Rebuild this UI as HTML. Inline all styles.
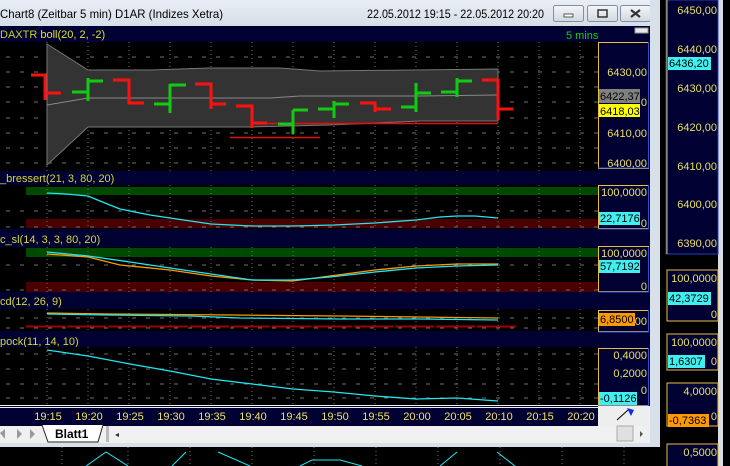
<!DOCTYPE html>
<html><head><meta charset="utf-8"><style>
html,body{margin:0;padding:0;background:#000;width:730px;height:466px;overflow:hidden}
svg{display:block}
text{font-family:"Liberation Sans",sans-serif;font-size:11px}
</style></head><body>
<svg width="730" height="466" viewBox="0 0 730 466">
<defs>
<linearGradient id="tb" x1="0" y1="0" x2="0" y2="1"><stop offset="0" stop-color="#e9eef4"/><stop offset="1" stop-color="#d6dee8"/></linearGradient>
<linearGradient id="bt" x1="0" y1="0" x2="0" y2="1"><stop offset="0" stop-color="#f4f6f8"/><stop offset="1" stop-color="#d2d8e0"/></linearGradient>
</defs>
<rect x="650" y="0" width="80" height="466" fill="#000"/>
<rect x="718" y="0" width="5" height="466" fill="#d9dee6"/>
<rect x="666" y="0" width="52" height="254" fill="#000033"/>
<rect x="666" y="0" width="52" height="254" fill="none" stroke="#2040c0"/>
<line x1="667" y1="0" x2="667" y2="254" stroke="#e8c040"/>
<g fill="#e8e060" text-anchor="end">
<text x="717" y="14">6450,00</text><text x="717" y="53">6440,00</text><text x="717" y="92">6430,00</text><text x="717" y="131">6420,00</text><text x="717" y="170">6410,00</text><text x="717" y="208">6400,00</text><text x="717" y="247">6390,00</text></g>
<rect x="668" y="57" width="43" height="13" fill="#40f0f0"/><text x="669" y="67" fill="#000">6436,20</text>
<rect x="667" y="270" width="51" height="51" fill="#000033" stroke="#e8c040"/>
<text x="717" y="282" fill="#e8e060" text-anchor="end">100,0000</text>
<rect x="668" y="292" width="43" height="13" fill="#40f0f0"/><text x="669" y="302" fill="#000">42,3729</text>
<text x="717" y="318" fill="#e8e060" text-anchor="end">0</text>
<rect x="667" y="334" width="51" height="36" fill="#000033" stroke="#e8c040"/>
<text x="717" y="346" fill="#e8e060" text-anchor="end">100,0000</text>
<rect x="668" y="355" width="37" height="13" fill="#40f0f0"/><text x="669" y="365" fill="#000">1,6307</text><text x="717" y="365" fill="#e8e060" text-anchor="end">0</text>
<rect x="667" y="383" width="51" height="43" fill="#000033" stroke="#e8c040"/>
<text x="717" y="395" fill="#e8e060" text-anchor="end">4,0000</text>
<rect x="668" y="414" width="41" height="13" fill="#ff9900"/><text x="669" y="424" fill="#000">-0,7363</text><text x="717" y="420" fill="#e8e060" text-anchor="end">0</text>
<rect x="667" y="444" width="51" height="30" fill="#000033" stroke="#e8c040"/>
<text x="717" y="456" fill="#e8e060" text-anchor="end">0,5000</text>

<rect x="0" y="0" width="660" height="447" fill="#d8e0ea"/>
<rect x="0" y="0" width="660" height="26" fill="url(#tb)"/>
<text x="0" y="18" fill="#000" style="font-size:12px" textLength="223" lengthAdjust="spacingAndGlyphs">Chart8 (Zeitbar 5 min)  D1AR (Indizes Xetra)</text>
<text x="367" y="18" fill="#000" style="font-size:12px" textLength="177" lengthAdjust="spacingAndGlyphs">22.05.2012 19:15 - 22.05.2012 20:20</text>
<g stroke="#8090a0" fill="url(#bt)"><rect x="553.5" y="5.5" width="30" height="16" rx="2"/><rect x="587.5" y="5.5" width="30" height="16" rx="2"/><rect x="620.5" y="5.5" width="30" height="16" rx="2"/></g>
<rect x="564" y="14" width="9" height="3" fill="#fff" stroke="#333" stroke-width="0.8"/>
<rect x="598" y="10" width="9" height="7" fill="none" stroke="#333" stroke-width="1.5"/>
<path d="M631 10 L640 17 M640 10 L631 17" stroke="#333" stroke-width="2.2"/>
<rect x="0" y="26" width="650" height="400" fill="#000033"/>

<text x="0" y="38" fill="#c8d020">DAXTR <tspan fill="#e0e020">boll(20, 2, -2)</tspan></text>
<text x="566" y="39" fill="#10d010">5 mins</text>
<rect x="635" y="28" width="13" height="5" fill="#e8e8e8" stroke="#999"/>
<text x="0" y="182" fill="#d8d830">_bressert(21, 3, 80, 20)</text>
<text x="0" y="243" fill="#d8d830">c_sl(14, 3, 3, 80, 20)</text>
<text x="0" y="305" fill="#d8d830">cd(12, 26, 9)</text>
<text x="0" y="345" fill="#d8d830">pock(11, 14, 10)</text>

<rect x="0" y="42" width="598" height="129" fill="#000"/>
<rect x="0" y="185" width="598" height="44" fill="#000"/>
<rect x="0" y="247" width="598" height="45" fill="#000"/>
<rect x="0" y="309" width="598" height="22" fill="#000"/>
<rect x="0" y="347" width="598" height="58" fill="#000"/>
<rect x="26" y="187" width="572" height="8" fill="#004a00"/>
<rect x="26" y="219" width="572" height="9" fill="#4a0000"/>
<rect x="26" y="248" width="572" height="9" fill="#004a00"/>
<rect x="26" y="282" width="572" height="10" fill="#4a0000"/>

<g stroke="#707070" stroke-dasharray="1,3" stroke-width="1">
<path d="M47 42V171M88 42V171M129 42V171M170 42V171M211 42V171M252 42V171M293 42V171M334 42V171M375 42V171M416 42V171M457 42V171M498 42V171M539 42V171M580 42V171"/>
<path d="M47 185V229M88 185V229M129 185V229M170 185V229M211 185V229M252 185V229M293 185V229M334 185V229M375 185V229M416 185V229M457 185V229M498 185V229M539 185V229M580 185V229"/>
<path d="M47 247V292M88 247V292M129 247V292M170 247V292M211 247V292M252 247V292M293 247V292M334 247V292M375 247V292M416 247V292M457 247V292M498 247V292M539 247V292M580 247V292"/>
<path d="M47 309V331M88 309V331M129 309V331M170 309V331M211 309V331M252 309V331M293 309V331M334 309V331M375 309V331M416 309V331M457 309V331M498 309V331M539 309V331M580 309V331"/>
<path d="M47 347V405M88 347V405M129 347V405M170 347V405M211 347V405M252 347V405M293 347V405M334 347V405M375 347V405M416 347V405M457 347V405M498 347V405M539 347V405M580 347V405"/>
</g>
<g stroke="#707070" stroke-dasharray="4,10">
<path d="M6 57H598M6 72H598M6 87H598M6 102H598M6 118H598M6 133H598M6 148H598M6 163H598"/>
<path d="M6 211H598M6 227H598M6 265H598M6 290H598M6 318H598M6 328H598"/>
<path d="M6 354H598M6 369H598M6 384H598M6 398H598"/>
</g>

<path d="M47 44 L88 70 L150 70 L210 68 L280 68 L320 71 L498 69 L498 121 L420 121 L330 125 L250 127 L108 127 L88 127 L47 165Z" fill="#333" stroke="#777"/>
<path d="M47 105 L88 98 L270 98 L300 96 L420 96 L498 95" fill="none" stroke="#888"/>

<path d="M230 137.5H320M265 123.5H498" stroke="#e01010" stroke-width="1.5"/>
<g stroke-width="3" fill="none">
<g stroke="#ff1010">
<path d="M31 75H45V100M45 93H61"/>
<path d="M113 80H129V103H144"/>
<path d="M195 84H211V109M211 104H226"/>
<path d="M236 106H252V128M252 123H267"/>
<path d="M360 103H375V112M375 109H391"/>
<path d="M482 80H498V120M498 109H513"/>
</g>
<g stroke="#10cc10">
<path d="M72 92H88M88 78V101M88 81H103"/>
<path d="M154 104H170M170 84V113M170 85H186"/>
<path d="M278 124H293M293 110V134M293 110H308"/>
<path d="M318 109H334M334 101V118M334 104H349"/>
<path d="M401 107H416M416 83V112M416 93H431"/>
<path d="M441 92H457M457 78V97M457 81H472"/>
</g></g>

<polyline fill="none" stroke="#20e8f0" stroke-width="1.3" points="47,193 66,194 88,196 100,201 120,209 150,215 170,218 211,224 252,226 293,226 334,225 375,223 416,220 440,217 457,216 475,216 498,218"/>
<polyline fill="none" stroke="#ff9900" stroke-width="1.3" points="47,254 88,257 120,265 170,270 211,276 252,280 293,281 330,276 375,270 416,266 457,264 498,264"/>
<polyline fill="none" stroke="#20e8f0" stroke-width="1.3" points="47,252 88,256 130,262 170,268 211,274 252,280 293,280 330,277 375,272 416,268 457,266 498,265"/>
<polyline fill="none" stroke="#ff9900" stroke-width="1.3" points="47,313 108,314 230,315 340,316 420,317 498,318"/>
<polyline fill="none" stroke="#20e8f0" stroke-width="1.3" points="47,314 108,315 190,316 240,318 340,319 420,319 498,320"/>
<path d="M26 326.5H518" stroke="#a00000" stroke-width="2" stroke-dasharray="39,2"/>
<polyline fill="none" stroke="#20e8f0" stroke-width="1.3" points="47,350 88,356 130,364 170,371 211,379 252,384 293,389 334,392 375,396 416,399 457,398 498,401"/>

<g fill="#000033" stroke="#e8c040"><rect x="598.5" y="42.5" width="50" height="126"/><rect x="598.5" y="185.5" width="50" height="43"/><rect x="598.5" y="246.5" width="50" height="45"/><rect x="598.5" y="310.5" width="50" height="21"/><rect x="598.5" y="348.5" width="50" height="57"/></g>
<g stroke="#3050d0" fill="none"><path d="M648.5 42V168H598M648.5 185V229H598M648.5 247V292H598M648.5 310V332H598M648.5 348V406H598"/></g>
<g fill="#e8e060" text-anchor="end">
<text x="647" y="76">6430,00</text><text x="647" y="106">0</text><text x="647" y="137">6410,00</text><text x="647" y="167">6400,00</text>
<text x="647" y="196">100,0000</text><text x="647" y="227">0</text>
<text x="647" y="257">100,0000</text><text x="647" y="290">0</text>
<text x="647" y="325">00</text>
<text x="647" y="359">0,4000</text><text x="647" y="377">0,2000</text><text x="647" y="394">0</text></g>
<rect x="599" y="89" width="41" height="14" fill="#808080"/><text x="600" y="100" fill="#000">6422,37</text>
<rect x="599" y="104" width="41" height="13" fill="#ffff00"/><text x="600" y="115" fill="#000">6418,03</text>
<rect x="599" y="212" width="41" height="13" fill="#40f0f0"/><text x="600" y="222" fill="#000">22,7176</text>
<rect x="599" y="260" width="41" height="13" fill="#40f0f0"/><text x="600" y="270" fill="#000">57,7192</text>
<rect x="599" y="313" width="36" height="13" fill="#ff9900"/><text x="600" y="323" fill="#000">6,8500</text>
<rect x="599" y="392" width="38" height="13" fill="#40f0f0"/><text x="600" y="402" fill="#000">-0,1126</text>

<path d="M0 405.5H598M0 407.5H598" stroke="#f0f0f0"/>
<g fill="#f0e060" text-anchor="middle" style="font-size:12px">
<text x="48" y="420">19:15</text><text x="89" y="420">19:20</text><text x="130" y="420">19:25</text><text x="171" y="420">19:30</text><text x="212" y="420">19:35</text><text x="253" y="420">19:40</text><text x="294" y="420">19:45</text><text x="335" y="420">19:50</text><text x="376" y="420">19:55</text><text x="417" y="420">20:00</text><text x="458" y="420">20:05</text><text x="499" y="420">20:10</text><text x="540" y="420">20:15</text><text x="581" y="420">20:20</text></g>
<rect x="598" y="406" width="52" height="20" fill="#eeeeee"/>
<path d="M617 420 L628 410" stroke="#000"/><path d="M627 408 L634 410 L631 416 Z" fill="#1030e0"/>

<rect x="0" y="426" width="650" height="17" fill="#f0f0f0"/>
<path d="M0 433L5 429V439Z" fill="#999"/><path d="M17 429L22 434L17 439Z" fill="#999"/><path d="M30 429L35 434L30 439Z" fill="#999"/>
<path d="M42 425 L48 442 H98 L103 425" fill="#fff" stroke="#222"/>
<text x="55" y="438" fill="#000" style="font-size:12px;font-weight:bold">Blatt1</text>
<rect x="106" y="426" width="3" height="16" fill="#bbb"/>
<path d="M119 433L115 435L119 437Z" fill="#333"/>
<rect x="617" y="426" width="16" height="15" fill="#e0e0e0" stroke="#aaa"/>
<path d="M640 431L643 434L640 437Z" fill="#555"/>
<rect x="0" y="443" width="660" height="4" fill="#d8e0ea"/>
<rect x="650" y="0" width="10" height="447" fill="#d8e0ea"/>
<rect x="0" y="447" width="660" height="19" fill="#000"/>
<g stroke="#707070" stroke-dasharray="1,3"><path d="M62 447V466M128 447V466M190 447V466M252 447V466M314 447V466M376 447V466M438 447V466M500 447V466M562 447V466M624 447V466"/></g>
<g fill="none" stroke="#20e8f0"><path d="M86 466 L106 452 L128 466M172 466 L186 452M218 452 L250 466M300 466 L312 460 L340 460 L362 466M440 466 L457 452M497 452 L515 466"/></g>
</svg>
</body></html>
